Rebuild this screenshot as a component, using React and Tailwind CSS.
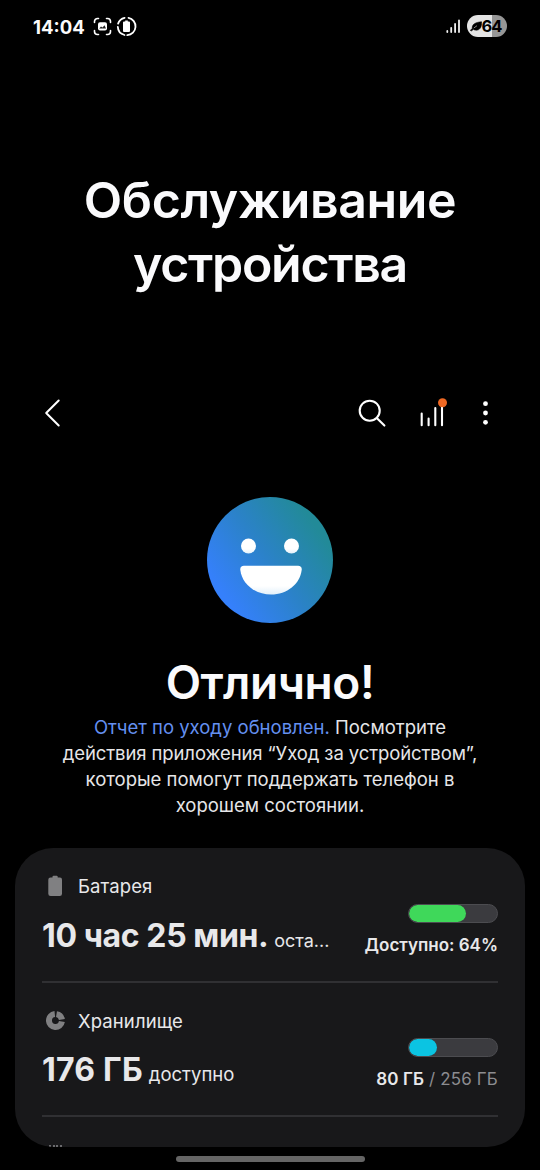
import React from 'react'

function StatusBar() {
  return (
    <div className="flex h-[52px] items-center justify-between pl-[33px] pr-[33px]">
      <div className="flex items-center">
        <span className="mt-[1px] w-[52px] whitespace-nowrap text-[18.5px] font-bold leading-6">14:04</span>
        <svg className="ml-[8px]" width="19" height="19" viewBox="0 0 19 19" fill="none">
          <path d="M1.500 5.500V4.500a3 3 0 0 1 3-3h1M13.500 1.500h1a3 3 0 0 1 3 3v1M17.500 13.500v1a3 3 0 0 1-3 3h-1M5.500 17.500h-1a3 3 0 0 1-3-3v-1" stroke="#fff" strokeWidth="1.600" strokeLinecap="round" />
          <rect x="5" y="5.200" width="9" height="8.400" rx="2" fill="#fff" />
          <path d="M6.200 11.500 8 9.400l1.500 1L11.500 8.200l1.500 3.300z" fill="#222" />
        </svg>
        <svg className="ml-[4px]" width="21" height="21" viewBox="0 0 21 21" fill="none">
          <path d="M12.500 1.800a8.800 8.800 0 0 1-1.200 17.400M8.600 1.800a8.800 8.800 0 0 0-6.500 5.800M1.800 10.800a8.800 8.800 0 0 0 6.700 8.200" stroke="#fff" strokeWidth="1.800" strokeLinecap="round" />
          <path d="M9.200 4.500h2.600v1h1.200a1 1 0 0 1 1 1v8.500a1 1 0 0 1-1 1H8a1 1 0 0 1-1-1V6.500a1 1 0 0 1 1-1h1.200z" fill="#fff" />
        </svg>
      </div>
      <div className="flex items-center">
        <svg width="15" height="16" viewBox="0 0 15 16" fill="none" stroke="#eee" strokeWidth="1.800" strokeLinecap="round">
          <path d="M1.300 13v1M5.200 9.800V14M9.100 6v8M13 2.300V14" />
        </svg>
        <div className="ml-[6px] flex h-[22px] w-[40px] items-center overflow-hidden rounded-full bg-[linear-gradient(90deg,#e4e4e4_63%,#969696_63%)] pl-[2.500px] text-black">
          <svg width="12" height="12" viewBox="0 0 12 12">
            <path d="M11.600 1.800c.3 5.200-1.800 8.400-5.300 8.400-1.300 0-2.100-.3-2.700-.9L1.200 11l-.9-.7 2-1.800C1.700 4.300 5.600 2.200 11.600 1.800z" fill="#000" stroke="#000" strokeWidth=".6" />
            <path d="M3.800 8 7 5.700" stroke="#e4e4e4" strokeWidth=".6" />
          </svg>
          <span className="text-[16.5px] font-bold leading-[22px] tracking-[-0.9px]">64</span>
        </div>
      </div>
    </div>
  )
}

function Toolbar() {
  return (
    <div className="flex h-[60px] items-center pl-[41px] pr-[47px]">
      <svg width="20" height="30" viewBox="0 0 20 30" fill="none" stroke="#fff" strokeWidth="2" strokeLinecap="round" strokeLinejoin="round">
        <path d="M17.700 2.500 5.200 15l12.500 12.500" />
      </svg>
      <svg className="ml-auto" width="30" height="30" viewBox="0 0 30 30" fill="none" stroke="#fff" strokeWidth="2.100" strokeLinecap="round">
        <circle cx="13.700" cy="12.700" r="10" />
        <path d="m21 20.200 7.400 7.400" />
      </svg>
      <svg className="ml-[30px]" width="32" height="32" viewBox="0 0 32 32" fill="none" stroke="#fff" strokeWidth="2.100" strokeLinecap="round">
        <path d="M5.700 16.500v11.700M12.600 21.500v6.700M19.300 11v17.200M26 8v20.200" />
        <circle cx="26.500" cy="5.700" r="4.500" fill="#ee6823" stroke="none" />
      </svg>
      <svg className="ml-[30px]" width="15" height="30" viewBox="0 0 15 30" fill="#fff">
        <circle cx="7.500" cy="5.700" r="2.400" />
        <circle cx="7.500" cy="15" r="2.400" />
        <circle cx="7.500" cy="24.300" r="2.400" />
      </svg>
    </div>
  )
}

function Smiley() {
  return (
    <svg className="mx-auto block" width="126" height="126" viewBox="0 0 126 126">
      <defs>
        <linearGradient id="face" x1="18" y1="100" x2="112" y2="34" gradientUnits="userSpaceOnUse">
          <stop offset="0" stopColor="#3580fb" />
          <stop offset=".5" stopColor="#2b82c8" />
          <stop offset="1" stopColor="#228a98" />
        </linearGradient>
        <linearGradient id="white" x1="0" y1="0" x2="0" y2="1">
          <stop offset=".7" stopColor="#fff" />
          <stop offset="1" stopColor="#e3f1fa" />
        </linearGradient>
      </defs>
      <circle cx="63" cy="63" r="63" fill="url(#face)" />
      <circle cx="41.500" cy="49" r="7.500" fill="url(#white)" />
      <circle cx="84.500" cy="49" r="7.500" fill="url(#white)" />
      <path d="M37 68.700h54c2.700 0 4 1.700 3.700 4.300C93 87 80 97.500 64 97.500S35 87 33.300 73c-.3-2.600 1-4.300 3.700-4.300z" fill="url(#white)" />
    </svg>
  )
}

function Bar({ percent, color }) {
  return (
    <div className="h-[19px] w-[90px] overflow-hidden rounded-full border border-[#4c4c50] bg-[#3b3b3f]">
      <div className={`h-full rounded-full ${color}`} style={{ width: `${percent}%` }}></div>
    </div>
  )
}

function CareRow({ icon, title, value, note, percent, color, children }) {
  return (
    <div className="flex h-[134.5px] justify-between border-b-2 border-[#303033]">
      <div>
        <div className="mt-[26px] flex h-6 items-center">
          <div className="ml-[4px] w-[32px]">{icon}</div>
          <span className="text-[18.5px] leading-6 tracking-[0.1px]">{title}</span>
        </div>
        <div className="mt-[16.900px] flex items-baseline whitespace-nowrap leading-[42px]">
          {value}
          {note}
        </div>
      </div>
      <div className="mt-[55.900px] flex flex-col items-end">
        <Bar percent={percent} color={color} />
        <div className="mt-[10px] whitespace-nowrap text-[17px] leading-6">{children}</div>
      </div>
    </div>
  )
}

const batteryIcon = (
  <svg width="18" height="22" viewBox="0 0 18 22" fill="#808082">
    <path d="M6.500 1.800q0-1 1-1h3.200q1 0 1 1v.7h1.700A2.300 2.300 0 0 1 16 4.800v13.900a2.300 2.300 0 0 1-2.300 2.300H4.600a2.300 2.300 0 0 1-2.300-2.300V4.800a2.300 2.300 0 0 1 2.300-2.300h1.900z" />
  </svg>
)

const storageIcon = (
  <svg width="20" height="20" viewBox="0 0 20 20" fill="none" stroke="#808082" strokeWidth="6">
    <path d="M8.800 3.100a6.500 6.500 0 1 0 7.100 7.500" />
    <path d="M10.500 3.100a6.500 6.500 0 0 1 5.400 5.400" />
  </svg>
)

function App() {
  return (
    <div className="flex h-[1170px] w-[540px] flex-col overflow-hidden bg-black font-['Inter',sans-serif] text-[#fafafc]">
      <StatusBar />

      <h1 className="mt-[116px] text-center text-[50px] font-semibold leading-[64px]">
        <span className="tracking-[-0.4px]">Обслуживание</span><br />
        <span className="tracking-[-1.3px]">устройства</span>
      </h1>

      <div className="mt-[87px]">
        <Toolbar />
      </div>

      <div className="mt-[54px]">
        <Smiley />
      </div>

      <h2 className="mt-[29px] text-center text-[46px] font-semibold leading-[60px] tracking-[-0.4px]">Отлично!</h2>

      <p className="mt-[2px] whitespace-nowrap text-center text-[18.5px] leading-[26px] text-[#e6e6e8]">
        <span className="text-[#6490f0]">Отчет по уходу обновлен.</span> Посмотрите<br />
        <span className="tracking-[-0.1px]">действия приложения “Уход за устройством”,</span><br />
        которые помогут поддержать телефон в<br />
        хорошем состоянии.
      </p>

      <div className="mx-[15px] mt-[30px] h-[299px] shrink-0 overflow-hidden rounded-[38px] bg-[#18181a] px-[27px] text-[#e8e8ea]">
        <CareRow
          icon={batteryIcon}
          title="Батарея"
          value={<span className="text-[32px] font-bold tracking-[-0.4px]">10 час 25 мин.</span>}
          note={<span className="ml-[6px] text-[18px]">оста...</span>}
          percent={65}
          color="bg-[#3fd85a]"
        >
          <span className="font-semibold">Доступно: 64%</span>
        </CareRow>
        <CareRow
          icon={storageIcon}
          title="Хранилище"
          value={<span className="text-[32px] font-bold tracking-[0.2px]">176 ГБ</span>}
          note={<span className="ml-[6px] text-[18.5px]">доступно</span>}
          percent={32}
          color="bg-[#0bc4e2]"
        >
          <span className="font-semibold tracking-[0.1px]">80 ГБ</span>
          <span className="tracking-[0.15px] text-[#8c8c90]"> / 256 ГБ</span>
        </CareRow>
        {/* top edge of the memory icon peeking from the next row */}
        <div className="ml-[7px] mt-[28px] flex gap-[1.500px]">
          <div className="h-[3px] w-[2px] bg-[#6a6a6d]"></div>
          <div className="h-[3px] w-[2px] bg-[#6a6a6d]"></div>
          <div className="h-[3px] w-[2px] bg-[#6a6a6d]"></div>
          <div className="h-[3px] w-[2px] bg-[#6a6a6d]"></div>
        </div>
      </div>

      <div className="mx-auto mt-[9px] h-[6px] w-[189px] shrink-0 rounded-full bg-[#656565]"></div>
    </div>
  )
}

export default App
